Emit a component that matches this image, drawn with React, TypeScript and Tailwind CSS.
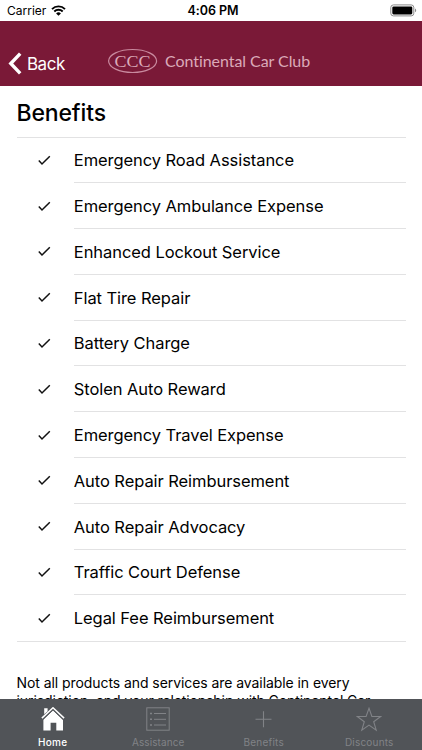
import React from 'react';

const benefits = [
  'Emergency Road Assistance',
  'Emergency Ambulance Expense',
  'Enhanced Lockout Service',
  'Flat Tire Repair',
  'Battery Charge',
  'Stolen Auto Reward',
  'Emergency Travel Expense',
  'Auto Repair Reimbursement',
  'Auto Repair Advocacy',
  'Traffic Court Defense',
  'Legal Fee Reimbursement',
];

function StatusBar() {
  return (
    <div className="h-[21px] shrink-0 bg-white grid grid-cols-3 items-center pl-[7px] pr-[5px] text-black">
      <div className="flex items-center gap-[5px]">
        <span className="text-[12px] leading-[21px]">Carrier</span>
        <svg width="15" height="11" viewBox="0 0 15 11" fill="none" stroke="#000" strokeWidth="1.9">
          <path d="M1 4.1a9.2 9.2 0 0 1 13 0" />
          <path d="M3.3 6.5a5.9 5.9 0 0 1 8.4 0" />
          <path d="M5.1 8.4a3.4 3.4 0 0 1 4.8 0L7.5 10.8z" fill="#000" stroke="none" />
        </svg>
      </div>
      <span className="pl-[2px] text-center text-[12.5px] leading-[21px] font-semibold tracking-[-0.05px] whitespace-nowrap">4:06 PM</span>
      <svg className="justify-self-end" width="27" height="13" viewBox="0 0 27 13">
        <rect x="0.8" y="0.9" width="23" height="11" rx="2.6" fill="none" stroke="#8a8a8a" strokeWidth="1" />
        <rect x="2.3" y="2.4" width="20" height="8" rx="1.3" fill="#000" />
        <path d="M25 4.5c1.6.5 1.6 3.3 0 3.8z" fill="#8a8a8a" />
      </svg>
    </div>
  );
}

function Header() {
  return (
    <header className="h-[65px] shrink-0 bg-[#7a1937] flex items-start pl-[8px]">
      <div className="flex items-center pt-[30px] w-[99px] text-white">
        <svg width="15" height="23" viewBox="0 0 15 23" fill="none" stroke="#fff" strokeWidth="3.4">
          <path d="M12.2 1.6 2.8 11.5l9.4 9.9" />
        </svg>
        <span className="ml-[4px] pt-px text-[17px] leading-[24px] tracking-[-0.5px]">Back</span>
      </div>
      <div className="flex items-center pt-[27px] text-[#dbaab9]">
        <svg width="51" height="26" viewBox="0 0 51 26">
          <ellipse cx="25.6" cy="13" rx="24" ry="11.5" fill="none" stroke="#c98a9f" strokeWidth="1.2" />
          <text x="7.6" y="18.6" textLength="36" lengthAdjust="spacingAndGlyphs" fontSize="17" fill="#dbaab9" fontFamily="'Liberation Serif', serif">CCC</text>
        </svg>
        <span className="ml-[7px] font-['Lato',sans-serif] text-[16px] leading-[26px] tracking-[-0.06px] whitespace-nowrap">
          Continental Car Club
        </span>
      </div>
    </header>
  );
}

function BenefitRow({ label }: { label: string }) {
  return (
    <li className="flex h-[45.8px] group">
      <div className="w-[57.3px] shrink-0 flex items-center pl-[21.5px]">
        <svg width="13" height="11" viewBox="0 0 13 11" fill="none" stroke="#111" strokeWidth="1.5">
          <path d="M.8 5.6 4 9 11.8 1.3" />
        </svg>
      </div>
      <div className="flex-1 flex items-center border-b border-[#e2e2e3] group-last:border-transparent">
        <span className="pt-[0.5px] text-[16.5px] leading-[22px] tracking-[-0.07px] whitespace-nowrap">{label}</span>
      </div>
    </li>
  );
}

function TabBar() {
  return (
    <nav className="h-[51px] shrink-0 bg-[#515458] grid grid-cols-4 text-[#818387] text-[10px] leading-[12px] tracking-[0.3px]">
      <div className="flex flex-col items-center text-white font-medium">
        <svg className="mt-[8px]" width="24" height="25" viewBox="0 0 24 25">
          <path d="M3.2 1.2h3.4v3L3.2 7.3z" fill="#fff" />
          <path d="M12 3.2 22 12.7v10.7h-6.7v-7.7H9.6v7.7H2.4V12.4z" fill="#fff" />
          <path d="M1.9 12.7 12 3.1l10.1 9.6" fill="none" stroke="#515458" strokeWidth=".8" />
          <path d="M.9 11.1 12 .8l11.1 10.3" fill="none" stroke="#fff" strokeWidth="1.5" />
        </svg>
        <span className="mt-[4px]">Home</span>
      </div>
      <div className="flex flex-col items-center">
        <svg className="mt-[8px]" width="24" height="25" viewBox="0 0 24 25" fill="none" stroke="#818387">
          <rect x=".8" y=".8" width="22.4" height="22.4" />
          <path d="M8 6.5h12M8 12.3h12M8 18h12" />
          <path d="M4 6.5h2M4 12.3h2M4 18h2" strokeWidth="1.6" />
        </svg>
        <span className="mt-[4px] tracking-[0.1px]">Assistance</span>
      </div>
      <div className="flex flex-col items-center">
        <svg className="mt-[8px]" width="24" height="25" viewBox="0 0 24 25" fill="none" stroke="#818387" strokeWidth="1.1">
          <path d="M11.5 4.3v16M3.5 12.3h16" />
        </svg>
        <span className="mt-[4px] tracking-[0.2px]">Benefits</span>
      </div>
      <div className="flex flex-col items-center">
        <svg className="mt-[8px]" width="26" height="25" viewBox="0 0 26 25" fill="none" stroke="#818387" strokeWidth="1.1">
          <path d="m13 1.3 2.9 8.2h8.8l-7 5.2 2.5 8.5-7.2-5.1-7.2 5.1 2.5-8.5-7-5.2h8.8z" />
        </svg>
        <span className="mt-[4px] tracking-[0.2px]">Discounts</span>
      </div>
    </nav>
  );
}

export default function App() {
  return (
    <div className="w-[422px] h-[750px] overflow-hidden bg-white text-black flex flex-col font-['Inter',sans-serif]">
      <StatusBar />
      <Header />
      <main className="flex-1 min-h-0 overflow-hidden pl-[16.5px] pr-[16.5px]">
        <h1 className="h-[50.5px] pt-[12px] text-[23px] leading-[30px] font-medium tracking-[-0.15px]">Benefits</h1>
        <ul className="border-y border-[#e2e2e3]">
          {benefits.map((label) => (
            <BenefitRow key={label} label={label} />
          ))}
        </ul>
        <p className="mt-[32px] text-[14px] leading-[18px] tracking-[-0.07px] whitespace-nowrap">
          Not all products and services are available in every
          <br />
          jurisdiction, and your relationship with Continental Car
        </p>
      </main>
      <TabBar />
    </div>
  );
}
